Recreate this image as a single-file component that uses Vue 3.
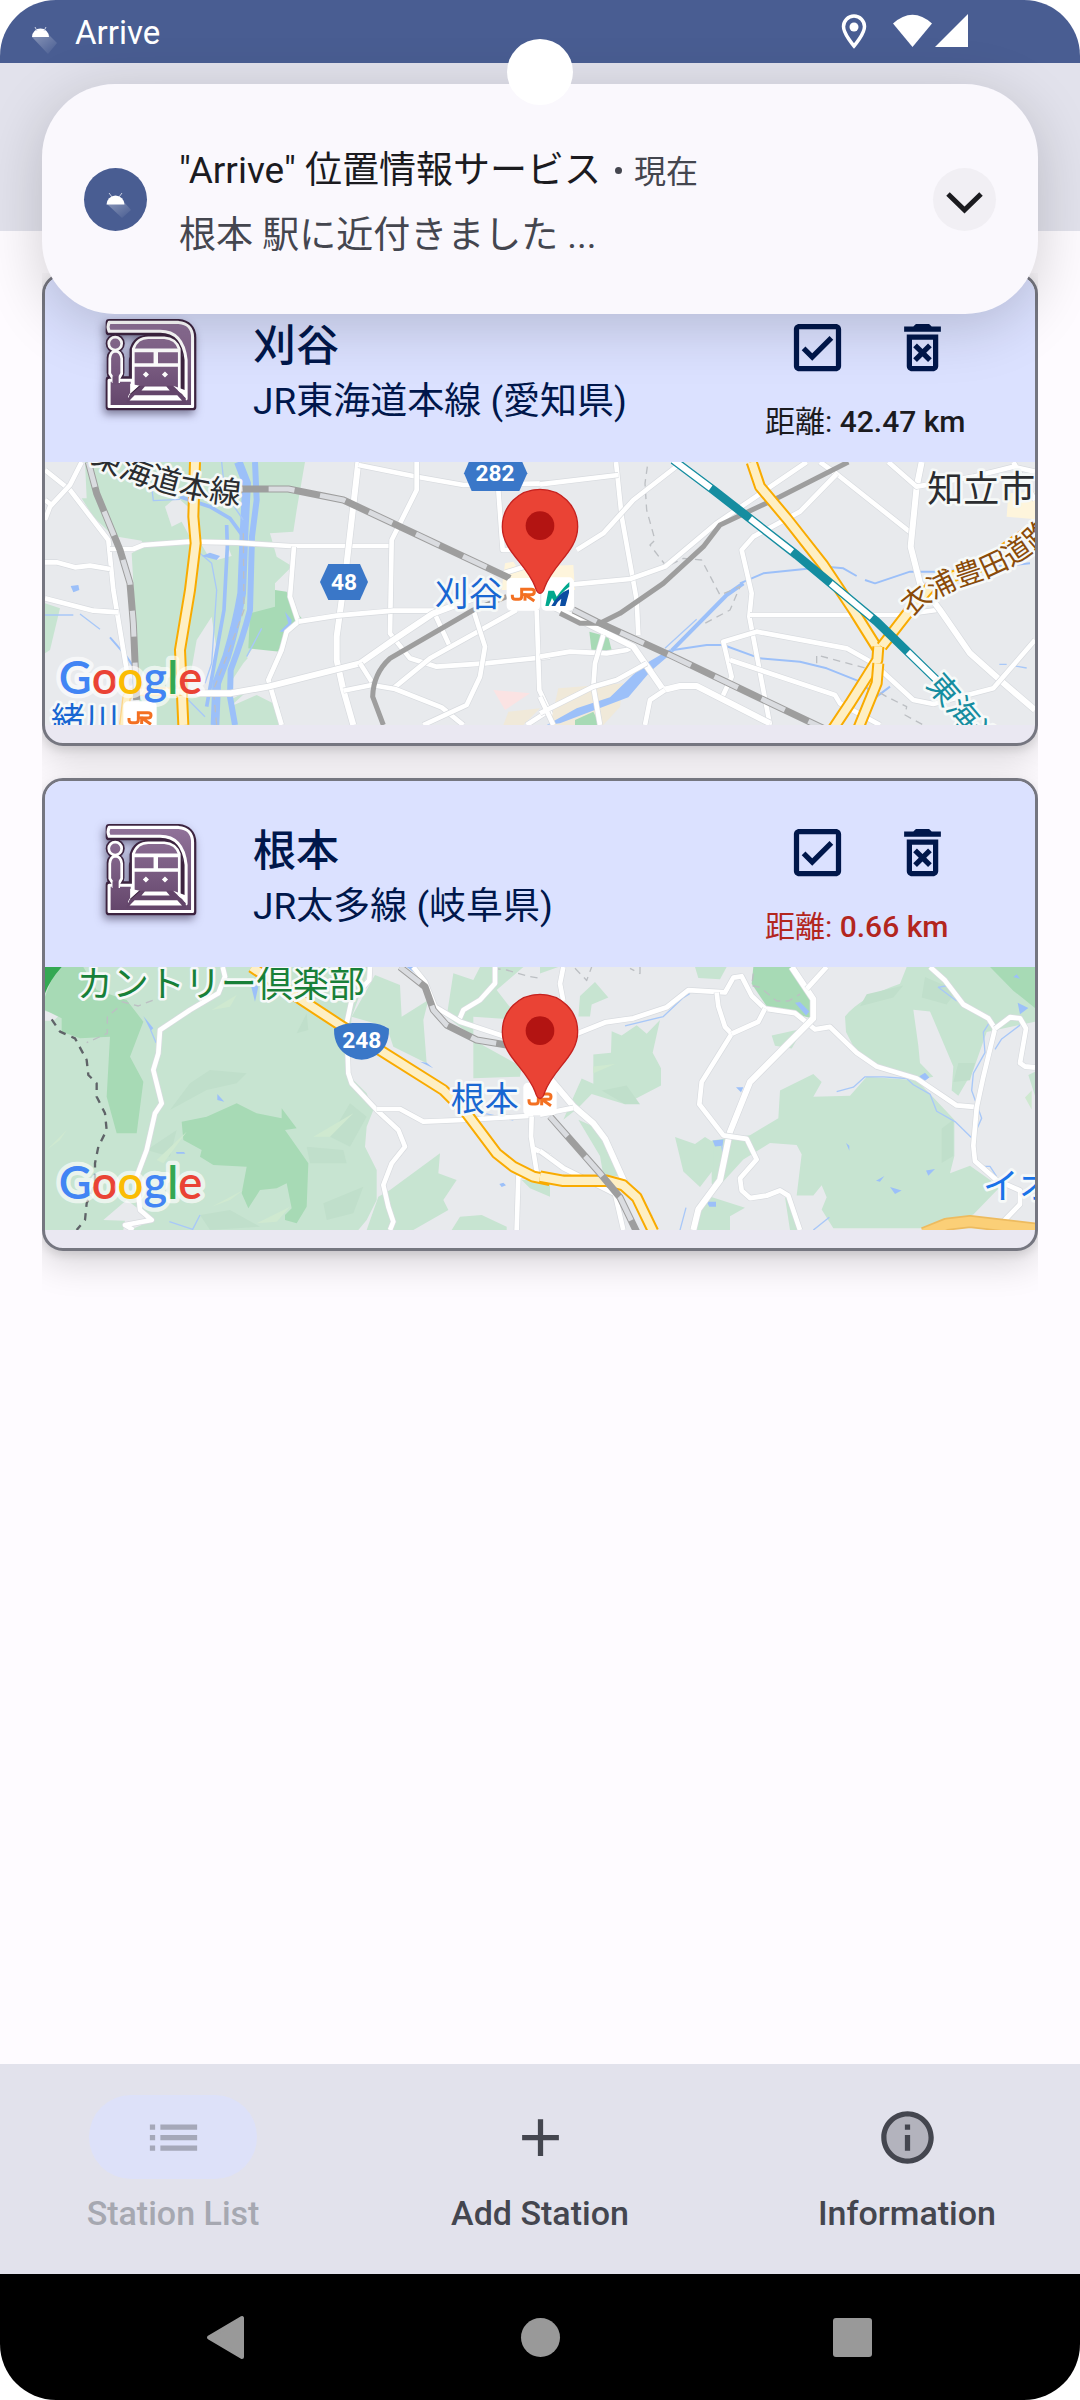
<script setup>
import { ref } from 'vue'

const kariyaMap = {
  viewBox: '45 36 2970 789',
  shift: 'translate(0 0)',
  halves: [
    {
      transform: 'translate(0 0)',
      shapes: [
        ['park', 'M165 36H825L800 180L790 245L720 250L785 350L735 400V500L650 620L700 680L600 770L680 735L750 770L745 825H330L325 660L310 400L305 310L340 290L335 272L250 258L190 200L155 145H170Z'],
        ['land', 'M405 170L425 230L455 215L480 262L485 180L440 140Z'],
        ['land', 'M515 285L590 280L605 318L560 330L530 310Z'],
        ['land', 'M720 250L790 282L785 348L740 320Z'],
        ['land', 'M640 640L700 570L740 610L715 690L610 745L600 700Z'],
        ['land', 'M500 570L545 500L560 600L530 740L470 740Z'],
        ['deep', 'M735 420L770 425L785 470L820 510L770 540L750 605L700 600L655 595L660 490L735 470Z'],
        ['park', 'M45 460L90 475L60 600L45 610Z'],
        ['rose', 'M1390 720L1500 730L1425 780Z'],
        ['sand', 'M1435 785L1530 775L1480 825H1420Z'],
        ['cream', 'M1425 340L1450 335L1460 350L1630 345L1635 420H1415Z'],
        ['river wide', 'M625 36L650 100L642 250L635 430Q620 520 590 620L560 700L555 825'],
        ['river', 'M675 36L680 150L666 260L660 480Q640 560 602 660L600 740L615 825'],
        ['river slim', 'M450 140L540 170L600 205L640 260M590 225L592 290L582 480L530 770'],
        ['stream', 'M575 36L585 130L640 210M510 310L545 340L560 420L545 640L525 700M45 495H130M150 492L210 538M365 110L370 152L450 148M475 750L525 800M695 535L650 620'],
        ['brook', 'M240 562L290 620L310 650'],
        ['pond', 'M122 408L145 405L148 420L130 427Z'],
        ['pond', 'M765 485L785 510L782 545H748L775 520Z'],
        ['pond', 'M540 308L570 318L560 330L515 318Z'],
        ['trail', 'M640 250L642 480L590 620L550 720L560 825'],
        ['road', 'M45 60L120 120L235 270L250 420L290 660'],
        ['road', 'M155 36L120 105L60 170L45 210M45 150L65 165'],
        ['road', 'M240 297H310L340 285L480 275L620 278L780 288H1085'],
        ['road', 'M45 337H80L135 352L180 347L240 357'],
        ['road', 'M45 445L190 482L265 487'],
        ['road bold', 'M985 36L950 340L920 560V630L940 720L970 825'],
        ['road', 'M985 45L1160 80L1300 105L1560 100'],
        ['road', 'M1160 36V120L1085 270L1080 550L1140 625L1220 650L1365 640L1560 620'],
        ['road', 'M792 290L780 440L805 515L770 545L755 600L715 690L755 825'],
        ['road', 'M805 515L920 497L1090 482H1210L1260 590'],
        ['road bold', 'M500 730H600L715 710L990 640L1090 570L1210 490L1330 445'],
        ['road', 'M1090 715L1200 625L1460 480'],
        ['road', 'M940 722L1025 705L1095 717L1235 772L1300 825M990 640L1025 695'],
        ['road', 'M1180 825L1310 765L1350 680L1365 590L1330 480'],
        ['road', 'M1520 480L1528 720L1570 810M1490 825L1560 780'],
        ['road', 'M1405 120L1418 300H1440M1420 370L1530 335'],
        ['highway', 'M495 36L490 200L497 280L480 420L450 600L460 825'],
        ['highway slim', 'M460 725H310L290 740L280 825'],
        ['rail', 'M175 36L200 130L270 300L300 400L310 520L320 750'],
        ['rail', 'M560 122L640 117H775L940 150L1440 385'],
        ['track', 'M1430 440L1330 480L1080 625Q1030 670 1028 740L1060 825'],
      ],
    },
    {
      transform: 'translate(1530 0)',
      shapes: [
        ['sand', 'M55 715L250 700L240 770L190 825H30Z'],
        ['deep', 'M148 545L205 560L215 600L155 605Z'],
        ['deep', 'M105 810L160 785L180 825H105Z'],
        ['cream', 'M1405 130L1485 125V208L1400 200Z'],
        ['pond', 'M20 825L110 775L210 742L310 645L390 598L400 605L330 665L265 742L60 820Z'],
        ['brook wide', 'M395 602L560 435L610 400'],
        ['brook', 'M600 400L670 370L860 350L910 355L950 378'],
        ['brook', 'M400 600L500 585H550L660 625L780 635L860 655L960 695L1010 740L1050 710'],
        ['brook', 'M975 390L1005 400L1110 365H1200L1470 340'],
        ['stream', 'M375 595L470 508M1378 643H1400M1425 648L1460 654'],
        ['trail', 'M322 50L315 100L320 180L345 270L330 285L380 350L430 325L485 330L540 435L600 410L570 480L495 520'],
        ['trail', 'M830 640V615L980 655M955 690L1040 740L1100 770L1095 795L1150 825'],
        ['road', 'M228 36L245 200L290 450L295 555'],
        ['road', 'M0 103L235 75'],
        ['road', 'M415 45L280 150L190 250L110 300'],
        ['road', 'M800 36L530 220L375 350L270 387L100 403'],
        ['road', 'M840 36L890 72L1115 250'],
        ['road', 'M890 72L780 185L640 260L605 300L635 430L628 500L690 825'],
        ['road', 'M630 495H1080L1190 480'],
        ['road bold', 'M1145 36L1130 110L1112 290L1140 400L1200 480L1290 610L1380 690L1485 780'],
        ['road', 'M1045 36L1130 110L1300 80L1420 50L1485 65M1420 36L1485 150'],
        ['road', 'M545 745L575 680L550 575L650 545L920 595L1000 640L1120 750L1180 762L1360 715L1485 570'],
        ['road', 'M570 630L885 735L900 760L1020 825'],
        ['road', 'M0 620L90 605L200 610L260 600L280 590'],
        ['road bold', 'M40 470L280 590L370 720L420 708H470L690 820'],
        ['road', 'M375 720L330 750L315 825'],
        ['road', 'M190 555L165 640L160 710L180 825'],
        ['road', 'M0 790L160 710L230 690L320 640M0 740L40 825'],
        ['track', 'M925 36L720 140L540 225L490 290L370 400L240 490L180 520H120L60 490'],
        ['highway', 'M635 36L660 110L740 205L850 345L940 480L1015 600'],
        ['highway', 'M1025 590L1110 480L1180 400L1320 350L1485 230'],
        ['highway', 'M1015 590L1012 630L930 760L880 835'],
        ['highway', 'M1015 640L1010 700L955 835'],
        ['rail', 'M100 480L170 515L400 620L640 735L850 835'],
        ['express', 'M400 30L520 120L770 315L1010 515L1190 690'],
      ],
    },
  ],
  curved: [
    { id: 'tokaido', text: '東海道本線', d: 'M180 36Q400 158 700 167', tone: 'ink', size: 94 },
    { id: 'kinuura', text: '衣浦豊田道路', d: 'M2645 502Q2720 428 2850 390Q2960 355 3060 260', tone: 'brown', size: 84 },
    { id: 'shinkansen', text: '東海道', d: 'M2686 706L2926 986', tone: 'teal', size: 92 },
  ],
  labels: [
    { text: '知立市', x: 2692, y: 156, tone: 'ink', size: 108 },
    { text: '刈谷', x: 1214, y: 468, tone: 'blue', size: 102 },
    { text: '緒川', x: 63, y: 846, tone: 'blue', size: 102 },
  ],
  badges: [
    { x: 1430, y: 384 },
    { x: 280, y: 754 },
  ],
  meitetsu: true,
  shields: [
    { text: '282', x: 1395, y: 93, d: 'M1302 70L1325 16H1468L1492 70L1468 123H1325Z' },
    { text: '48', x: 942, y: 419, d: 'M870 396L895 342H990L1014 396L990 450H895Z' },
  ],
}

const nemotoMap = {
  viewBox: '45 51 2970 789',
  shift: 'translate(0 15)',
  halves: [
    {
      transform: 'translate(0 0)',
      shapes: [
        ['park', 'M45 51H1020L965 200L950 370L1010 430L1030 480L1010 530L1005 590L1040 660V750L1010 810L985 840H45Z'],
        ['land', 'M45 183L90 195L70 212H45Z'],
        ['land', 'M220 810L290 750L330 780L370 810L300 840H280L285 812Z'],
        ['deep', 'M45 140L80 51H160L200 120L290 150L340 215L300 320L340 395L320 550H260L230 440L240 260L150 265L95 245V205L45 180Z'],
        ['deep', 'M455 515L530 500L620 460L680 490L755 505V475L800 535L765 540L835 640L830 770L800 820L765 810V795L785 775L770 700L740 715L690 720L655 775L635 730L650 650L550 645L510 620L515 600L460 570Z'],
        ['shade', 'M540 360L650 370L620 400L530 420L420 480L480 400Z'],
        ['shade', 'M800 250L830 190L835 240ZM960 460L1010 500L960 590L900 560ZM830 590L940 600L950 640L840 640Z'],
        ['shade', 'M510 795L600 780L690 830L540 840ZM880 760L1000 710L970 790L890 810ZM350 600L440 540L420 620Z'],
        ['glow', 'M545 180L620 135L600 170ZM850 560L970 490L900 560ZM380 630L470 545L400 640ZM545 770L640 720L600 750ZM50 600L110 540L90 570ZM680 820L780 770L740 815Z'],
        ['park', 'M1035 75L1110 105L1115 200L1195 150L1180 210L1190 340L1090 290L1070 230L965 200Z'],
        ['park', 'M1270 70L1330 90L1350 51H1480L1400 120L1470 210L1330 200V270L1475 350L1470 380L1330 385L1330 260L1250 200Z'],
        ['park', 'M1080 720L1230 610L1225 670L1280 690L1240 750L1255 780L1150 840H1010L1045 740Z'],
        ['park', 'M1265 840L1290 800L1355 795L1430 830V840Z'],
        ['park', 'M1475 690H1560V740L1500 715Z'],
        ['pond', 'M340 198L370 235L362 242Z'],
        ['pond', 'M562 432L583 455L562 450Z'],
        ['pond', 'M660 95L685 110L675 155Z'],
        ['pond', 'M1130 51H1150L1170 80Z'],
        ['pond', 'M1170 335L1190 338L1210 355ZM438 606H462L466 611H440ZM1408 702L1420 698L1428 706L1415 711Z'],
        ['stream', 'M362 240L378 278M418 815L488 838L510 795M1340 485L1450 510'],
        ['trail', 'M275 155L325 168L370 150M262 175L232 200V250L170 278M1390 55L1430 60L1500 80L1530 85'],
        ['road', 'M578 51L585 80L565 130L480 180L390 240L385 310L370 360L395 460L375 490L350 600L320 680L330 780L365 810L285 825L310 840'],
        ['road', 'M1020 51L1018 90L965 150L950 220L955 370L965 400L1040 480L1105 540L1125 590L1085 640L1060 705L1075 770L1090 815L1080 840'],
        ['road', 'M1040 477H1110L1180 515L1300 510L1510 497'],
        ['road', 'M1505 500L1503 560L1520 665L1465 680L1460 840M1510 595L1560 620'],
        ['road', 'M1395 51V100L1350 150L1300 180L1285 215'],
        ['road', 'M1150 51L1185 95L1215 170L1290 215L1440 265'],
        ['highway', 'M665 51L930 225L1240 420L1310 490L1400 610L1450 650L1510 680L1560 690'],
        ['rail', 'M1110 51L1185 110L1210 180L1250 225L1340 270L1430 285'],
        ['footpath', 'M65 208L90 245L135 265L170 330L175 375L200 400V440L225 490L230 540L205 590L195 640L195 700L170 760L165 810L140 840'],
        ['pin-edge', 'M45 51H95Q60 90 45 130Z'],
      ],
    },
    {
      transform: 'translate(1530 -570) scale(1 1.0331)',
      shapes: [
        ['park', 'M915 745Q960 690 1080 650L1100 601H1485V760L1340 790L1300 900L1255 975L1235 960L1240 890L1170 730L1120 725L1135 830L1140 880L1180 920L1130 930L1010 890L950 850L918 790Z'],
        ['park', 'M720 960L820 912L845 935L820 978L930 975L980 920L1130 930L1180 980L1243 1045V1150L1230 1200L1290 1178L1380 1240L1300 1320L1170 1360H880L845 1305L860 1270L845 1235L820 1265H770L785 1145L770 1118L690 1112L610 1160L530 1245L515 1230V1105L630 1090L715 1040Z'],
        ['park', 'M160 855L213 850L215 788L245 800L290 770L320 795L360 755L338 850L363 895V945L255 1000L155 970L115 1010L70 1045L125 925L160 940Z'],
        ['park', 'M405 1095L465 1115L495 1095L520 1110V1190L480 1240L430 1195Z'],
        ['park', 'M115 1045L185 1075L245 1210L190 1205L180 1150Z'],
        ['park', 'M500 1265L615 1300L570 1325V1365H465Z'],
        ['park', 'M465 601H560L540 637L475 633Z'],
        ['park', 'M120 685L165 645L205 690L155 710L150 745H115Z'],
        ['park', 'M695 800L790 780L755 838L705 830Z'],
        ['park', 'M735 1270L760 1290L780 1365H750ZM1465 915L1485 905V975ZM0 601H55L0 620Z'],
        ['deep', 'M640 601H755L820 700L815 750L680 715L635 650Z'],
        ['deep', 'M1350 601H1485V720L1420 670Z'],
        ['shade', 'M1155 630L1250 670L1220 710L1145 690ZM980 680L1090 655L1060 690L960 715ZM1255 880L1305 880L1290 930L1240 935ZM1205 1070L1240 1045V1150L1205 1170ZM185 960L260 945L300 1000L255 1000Z'],
        ['glow', 'M160 890L225 883L160 910ZM1455 980L1475 960V1015Z'],
        ['pond', 'M765 705L780 703L808 730L798 742Z'],
        ['pond', 'M1433 705L1465 720L1440 738Z'],
        ['pond', 'M1420 630L1430 622L1440 635ZM1138 918L1155 908L1168 922L1150 935Z'],
        ['pond', 'M1050 1240L1085 1250L1065 1260ZM518 1105L550 1102L548 1120L525 1122Z'],
        ['pond', 'M500 1283H528V1297H508ZM1158 1192L1185 1188L1165 1207ZM1008 1222L1033 1208L1020 1225ZM588 950H610L603 965ZM918 1112L928 1120V1135Z'],
        ['stream', 'M255 772L370 745L430 690L450 678M890 963L940 950L975 920H1030L1100 925L1120 943L1170 970L1190 1020L1245 1050L1298 1100L1325 1040L1295 960L1300 910L1335 850L1330 790L1350 760M1365 840L1385 810L1440 770M1300 1165L1320 1180H1350L1370 1210M1250 700L1195 660L1225 655M820 1365L868 1328M420 1365L438 1300M545 1120L555 1170'],
        ['trail', 'M105 605L140 640L155 601M300 601V620L270 605M640 620L635 655L660 660L710 700H745L780 680'],
        ['road', 'M70 601L60 650L70 700'],
        ['road', 'M110 795L195 762L280 750L380 718L445 668L555 675L580 632L605 628L635 685L675 722L765 735L825 782L870 775L950 850L1010 890L1130 925L1250 1003L1310 1008'],
        ['road bold', 'M755 601L820 695V750L630 935L570 1080L540 1220L475 1305L460 1365'],
        ['road', 'M530 675L535 715L555 775L575 795L485 935L478 1000L550 1090L620 1100L650 1160L600 1215L605 1250L630 1272L680 1265L720 1250L745 1265L780 1365'],
        ['road', 'M675 722L655 760L575 795M860 601L800 665'],
        ['road', 'M1170 601L1215 640L1270 710L1345 750L1365 780L1330 920L1310 1010L1300 1120L1305 1165L1370 1220L1440 1250L1440 1290L1390 1340'],
        ['road', 'M1365 780L1410 747L1440 750L1458 780L1440 880L1455 890L1485 893'],
        ['road bold', 'M30 925L100 1005L160 1055L195 1100L260 1240L330 1330'],
        ['road', 'M0 1135L70 1185L225 1260L250 1365'],
        ['road', 'M0 1030L100 1010'],
        ['highway', 'M0 1210L70 1222H200L250 1235L290 1270L340 1370'],
        ['motorway', 'M1150 1375L1220 1348L1290 1340L1485 1362'],
        ['rail', 'M30 1035L180 1200L240 1270L290 1370'],
      ],
    },
  ],
  curved: [],
  labels: [
    { text: 'カントリー倶楽部', x: 140, y: 142, tone: 'green', size: 108 },
    { text: '根本', x: 1262, y: 484, tone: 'blue', size: 102 },
    { text: 'イオン', x: 2858, y: 748, tone: 'azure', size: 108 },
  ],
  badges: [{ x: 1480, y: 398 }],
  meitetsu: false,
  shields: [
    {
      text: '248',
      x: 995,
      y: 293,
      d: 'M912 236Q940 220 968 219H1022Q1050 220 1077 236Q1078 296 1030 320Q995 338 960 320Q911 296 912 236Z',
    },
  ],
}

const stations = ref([
  { name: '刈谷', line: 'JR東海道本線 (愛知県)', distance: '42.47 km', near: false, enabled: true, map: kariyaMap },
  { name: '根本', line: 'JR太多線 (岐阜県)', distance: '0.66 km', near: true, enabled: true, map: nemotoMap },
])
</script>

<template>
  <div class="screen">
    <header class="status-bar">
      <svg class="droid" viewBox="0 0 63 63" aria-hidden="true">
        <defs>
          <linearGradient id="cast" x1="0" y1="0" x2="1" y2="1">
            <stop offset="0" stop-color="#fff" stop-opacity=".35" />
            <stop offset="1" stop-color="#fff" stop-opacity="0" />
          </linearGradient>
        </defs>
        <path d="M20 37L37 35L45 43L36 54Z" fill="url(#cast)" />
        <path d="M20 37a8 8 0 0 1 17 0z" fill="#fff" />
        <path d="M23 27l2 4M34 27l-2 4" stroke="#c9d0e4" stroke-width="1" />
      </svg>
      <span class="carrier">Arrive</span>
      <div class="status-icons">
        <svg width="26" height="36" viewBox="0 0 26 36" aria-hidden="true">
          <path d="M13 2C7 2 2.500 7 2.500 12.500C2.500 20 13 32 13 32S23.500 20 23.500 12.500C23.500 7 19 2 13 2Z" fill="none" stroke="#fff" stroke-width="3.500" />
          <circle cx="13" cy="13" r="4.500" fill="#fff" />
        </svg>
        <svg class="wifi" width="75" height="34" viewBox="0 0 75 34" aria-hidden="true">
          <path d="M0 9.500Q19.500-8 39 9.500L19.500 33Z" fill="#fff" />
          <path d="M75 0V33H42Z" fill="#fff" />
        </svg>
      </div>
    </header>
    <div class="app-bar"></div>

    <main class="content">
      <div class="cards">
        <article v-for="station in stations" :key="station.name" class="card">
          <div class="card-head">
            <svg class="station-icon" viewBox="48 30 270 270" aria-hidden="true">
              <defs>
                <linearGradient id="plum" gradientUnits="userSpaceOnUse" x1="0" y1="40" x2="0" y2="290">
                  <stop offset="0" stop-color="#91739a" />
                  <stop offset="1" stop-color="#63456a" />
                </linearGradient>
              </defs>
              <g stroke="#3d2440" stroke-width="20" stroke-linejoin="round" fill="#3d2440">
                <path d="M60 40H264C290 42 306 58 306 84V288H60V208H128V150L290 150V150C280 95 255 68 210 68H60Z" />
                <circle cx="78" cy="102" r="18" />
                <rect x="63" y="130" width="32" height="70" rx="12" />
                <path d="M130 240V120Q140 86 175 86H222Q258 86 266 120V240Z" />
              </g>
              <path d="M60 40H264C290 42 305 58 305 84V287H60V210H128V245L120 258H275L286 264V150C280 95 255 66 210 66H60Q54 53 60 40Z" fill="url(#plum)" stroke="#fff" stroke-width="9" stroke-linejoin="round" />
              <circle cx="78" cy="102" r="19" fill="url(#plum)" stroke="#fff" stroke-width="8" />
              <path d="M62 190V146Q64 124 79 124Q95 126 97 146V190L88 206V214H72V206Z" fill="url(#plum)" stroke="#fff" stroke-width="8" />
              <path d="M70 198H88V222H70Z" fill="#6d4f74" />
              <path d="M131 244V118Q142 85 175 85H222Q256 87 266 118V244Z" fill="url(#plum)" stroke="#fff" stroke-width="8" />
              <path d="M131 122H266M131 165H266" stroke="#fff" stroke-width="11" />
              <path d="M197 122V165" stroke="#fff" stroke-width="13" />
              <path d="M168 184l9 9l-9 9l-9-9ZM224 184l9 9l-9 9l-9-9Z" fill="#fff" />
              <path d="M120 254L148 226H248L285 262V276H110Z" fill="#63456a" />
              <path d="M122 220L150 226L122 250Z" fill="#fff" />
              <path d="M248 226L286 240V262Z" fill="#fff" />
              <path d="M165 228H228L238 240H155ZM135 254H260L274 269H120Z" fill="#fff" />
              <path d="M150 226L122 251" stroke="#3d2440" stroke-width="3" />
            </svg>
            <div class="station-text">
              <h2>{{ station.name }}</h2>
              <p>{{ station.line }}</p>
            </div>
            <div class="station-side">
              <div class="actions">
                <label class="action">
                  <input v-model="station.enabled" type="checkbox" :aria-label="station.name" />
                  <svg viewBox="0 0 24 24" aria-hidden="true">
                    <path d="M19 3H5c-1.110 0-2 .9-2 2v14c0 1.100.89 2 2 2h14c1.110 0 2-.9 2-2V5c0-1.100-.89-2-2-2zm0 16H5V5h14v14z" />
                    <path v-if="station.enabled" d="M17.990 9l-1.410-1.420-6.590 6.590-2.580-2.570-1.420 1.410 4 3.990z" />
                  </svg>
                </label>
                <button class="action" type="button" aria-label="削除">
                  <svg viewBox="0 0 24 24" aria-hidden="true">
                    <path d="M14.120 10.470L12 12.590l-2.130-2.120-1.410 1.410L10.590 14l-2.120 2.120 1.410 1.410L12 15.410l2.120 2.120 1.410-1.410L13.410 14l2.120-2.120zM15.500 4l-1-1h-5l-1 1H5v2h14V4zM6 19c0 1.100.9 2 2 2h8c1.100 0 2-.9 2-2V7H6v12zM8 9h8v10H8V9z" />
                  </svg>
                </button>
              </div>
              <p class="distance" :class="{ near: station.near }">
                距離: <b>{{ station.distance }}</b>
              </p>
            </div>
          </div>

          <svg class="map" :viewBox="station.map.viewBox" preserveAspectRatio="xMidYMid slice" role="img" :aria-label="station.name">
            <g v-for="half in station.map.halves" :key="half.transform" :transform="half.transform">
              <template v-for="([kind, d], i) in half.shapes" :key="i">
                <path v-if="kind.startsWith('road')" :class="[kind, 'casing']" :d="d" />
                <path :class="kind" :d="d" />
                <path v-if="/^(highway|rail|express|motorway)/.test(kind)" :class="[kind, 'core']" :d="d" />
              </template>
            </g>

            <g class="shields">
              <template v-for="shield in station.map.shields" :key="shield.text">
                <path :d="shield.d" />
                <text :x="shield.x" :y="shield.y">{{ shield.text }}</text>
              </template>
            </g>

            <g class="labels">
              <template v-for="label in station.map.curved" :key="label.id">
                <path :id="label.id" :d="label.d" fill="none" />
                <text :class="label.tone" :font-size="label.size">
                  <textPath :href="'#' + label.id">{{ label.text }}</textPath>
                </text>
              </template>
              <text v-for="label in station.map.labels" :key="label.text" :class="label.tone" :font-size="label.size" :x="label.x" :y="label.y">{{ label.text }}</text>
            </g>

            <g v-for="badge in station.map.badges" :key="badge.x" :transform="`translate(${badge.x} ${badge.y})`">
              <rect width="100" height="98" rx="14" fill="#fff" />
              <path d="M17 50V55Q17 64 26 64H36Q45 64 45 55V34H74Q83 34 83 42Q83 50 74 50H55L83 69" fill="none" stroke="#f37021" stroke-width="9" />
              <path d="M55 46V68" stroke="#f37021" stroke-width="9" />
            </g>
            <g v-if="station.map.meitetsu">
              <rect x="1534" y="382" width="98" height="100" rx="14" fill="#fff" />
              <path d="M1555 422H1572L1580 440Q1600 412 1618 396V410Q1590 430 1574 458L1566 444L1556 468H1546Z" fill="#00a88e" />
              <path d="M1564 468Q1585 430 1617 418V428L1606 468H1590L1594 446Q1582 454 1576 468Z" fill="#0b4da2" />
            </g>

            <g :transform="station.map.shift">
              <path d="M1530 118C1466 118 1417 168 1417 230C1417 304 1490 340 1516 412Q1521 430 1530 430Q1539 430 1544 412C1570 340 1643 304 1643 230C1643 168 1594 118 1530 118Z" fill="#ea4335" stroke="#c5221f" stroke-width="4" />
              <circle cx="1530" cy="227" r="43" fill="#b31412" />
              <text class="google" x="86" y="732">
                <tspan fill="#4285f4">G</tspan><tspan fill="#ea4335">o</tspan><tspan fill="#fbbc04">o</tspan><tspan fill="#4285f4">g</tspan><tspan fill="#34a853">l</tspan><tspan fill="#ea4335">e</tspan>
              </text>
            </g>
          </svg>
        </article>
      </div>
    </main>

    <nav class="tabs">
      <button class="tab current" type="button" disabled>
        <span class="tab-icon">
          <svg viewBox="0 0 24 24" aria-hidden="true"><path d="M3 13h2v-2H3v2zm0 4h2v-2H3v2zm0-8h2V7H3v2zm4 4h14v-2H7v2zm0 4h14v-2H7v2zM7 7v2h14V7H7z" /></svg>
        </span>
        Station List
      </button>
      <button class="tab" type="button">
        <span class="tab-icon">
          <svg viewBox="0 0 24 24" aria-hidden="true"><path d="M19 13h-6v6h-2v-6H5v-2h6V5h2v6h6v2z" /></svg>
        </span>
        Add Station
      </button>
      <button class="tab" type="button">
        <span class="tab-icon">
          <svg viewBox="0 0 24 24" aria-hidden="true">
            <circle cx="12" cy="12" r="9" opacity=".3" />
            <path d="M11 7h2v2h-2zm0 4h2v6h-2zm1-9C6.480 2 2 6.480 2 12s4.480 10 10 10 10-4.480 10-10S17.520 2 12 2zm0 18c-4.410 0-8-3.590-8-8s3.590-8 8-8 8 3.590 8 8-3.590 8-8 8z" />
          </svg>
        </span>
        Information
      </button>
    </nav>

    <div class="system-nav">
      <button type="button" aria-label="戻る">
        <svg viewBox="0 0 63 63"><path d="M12 31.500L45 12V51Z" stroke="#999" stroke-width="4" stroke-linejoin="round" /></svg>
      </button>
      <button type="button" aria-label="ホーム">
        <svg viewBox="0 0 63 63"><circle cx="31.500" cy="31.500" r="19.500" /></svg>
      </button>
      <button type="button" aria-label="最近">
        <svg viewBox="0 0 63 63"><rect x="12" y="12" width="39" height="39" rx="3" /></svg>
      </button>
    </div>

    <section class="notification">
      <span class="app-icon">
        <svg class="droid" viewBox="0 0 63 63" aria-hidden="true">
          <path d="M23 36L40 34L47 42L38 50Z" fill="url(#cast)" />
          <path d="M22.500 36.500a9 9 0 0 1 18 0z" fill="#fff" />
          <path d="M25 25l3 4M38 25l-3 4" stroke="#c9d0e4" stroke-width="1" />
        </svg>
      </span>
      <div class="message">
        <p class="title">"Arrive" 位置情報サービス<span class="time"><i></i>現在</span></p>
        <p class="body">根本 駅に近付きました ...</p>
      </div>
      <button class="expand" type="button" aria-label="展開">
        <svg viewBox="0 0 63 63" aria-hidden="true"><path d="M15 26L31.500 42L48 26" fill="none" stroke="#1b1b1f" stroke-width="5" /></svg>
      </button>
    </section>
    <div class="camera"></div>
  </div>
</template>

<style>
body {
  margin: 0;
  background: #fff;
}
</style>

<style scoped>
.screen {
  position: relative;
  display: flex;
  flex-direction: column;
  min-height: 100vh;
  overflow: hidden;
  border-radius: 56px;
  background: #fefbff;
  color: #1b1b1f;
  font-family: Roboto, "Noto Sans CJK JP", sans-serif;
}
h2,
p {
  margin: 0;
}
button {
  padding: 0;
  border: 0;
  background: none;
  font: inherit;
  color: inherit;
}
svg {
  display: block;
}

.status-bar {
  display: flex;
  align-items: center;
  height: 63px;
  padding: 0 112px 0 12px;
  background: #495d92;
  color: #fff;
}
.droid {
  width: 63px;
  height: 63px;
}
.carrier {
  padding-top: 2px;
  font-size: 33px;
  line-height: 40px;
}
.status-icons {
  display: flex;
  gap: 26px;
  margin-left: auto;
}
.app-bar {
  height: 168px;
  background: #e2e2ec;
}

.content {
  flex: 1;
  padding: 42px 42px 0;
}
.cards {
  display: flex;
  flex-direction: column;
  gap: 32px;
  padding-bottom: 64px;
  overflow: hidden;
}
.card {
  overflow: hidden;
  padding-bottom: 18px;
  border: 3px solid #757680;
  border-radius: 21px;
  background: #eae8f2;
  box-shadow: 0 12px 36px rgba(0, 0, 0, 0.16), 0 4px 8px rgba(0, 0, 0, 0.1);
}
.card-head {
  display: flex;
  height: 186px;
  padding: 0 60px;
  background: #dbe1ff;
  color: #00174b;
}
.station-icon {
  width: 92px;
  height: 92px;
  margin-top: 43px;
  overflow: visible;
  filter: drop-shadow(-2px 4px 4px rgba(30, 20, 50, 0.5));
}
.station-text {
  flex: 1;
  margin-left: 56px;
  padding-top: 41px;
}
.station-text h2 {
  font-size: 43px;
  font-weight: 500;
  line-height: 58px;
}
.station-text p {
  font-size: 37px;
  line-height: 54px;
}
.station-side {
  padding-top: 19px;
}
.actions {
  display: flex;
}
.action {
  position: relative;
  display: grid;
  place-items: center;
  width: 105px;
  height: 105px;
}
.action input {
  position: absolute;
  inset: 0;
  width: 100%;
  height: 100%;
  margin: 0;
  opacity: 0;
}
.action svg {
  width: 63px;
  height: 63px;
  fill: #00174b;
}
.distance {
  padding-top: 1px;
  color: #1b1b1f;
  font-size: 30px;
  line-height: 42px;
}
.distance b {
  font-weight: 500;
}
.distance.near {
  color: #b3261e;
}

.map {
  width: 100%;
  height: 263px;
  background: #e8eaed;
}
.land { fill: #e8eaed; }
.park { fill: #c7e4d1; }
.deep { fill: #a7dab5; }
.shade { fill: #c0dfcb; }
.glow { fill: #cfe9d0; }
.sand { fill: #f0e9d9; }
.cream { fill: #fef5dc; }
.rose { fill: #fbe3e3; }
.pond { fill: #9cc0f9; }
.pin-edge { fill: #34a853; }
.river,
.brook,
.stream,
.trail,
.footpath,
.road,
.highway,
.motorway,
.rail,
.track,
.express {
  fill: none;
  stroke-linejoin: round;
}
.river { stroke: #9cc0f9; stroke-width: 18; }
.river.wide { stroke-width: 26; }
.river.slim { stroke-width: 11; }
.brook { stroke: #9cc0f9; stroke-width: 6; }
.brook.wide { stroke-width: 12; }
.stream { stroke: #a8c8f8; stroke-width: 4; }
.trail { stroke: #bcbfc3; stroke-width: 4; stroke-dasharray: 22 16; }
.footpath { stroke: #5f6368; stroke-width: 7; stroke-dasharray: 22 19; }
.road { stroke: #fff; stroke-width: 14; }
.road.casing { stroke: #d8dbdf; stroke-width: 18; }
.road.bold { stroke-width: 18; }
.road.bold.casing { stroke-width: 22; }
.highway { stroke: #f9ab00; stroke-width: 36; }
.highway.core { stroke: #feefc3; stroke-width: 24; }
.highway.slim { stroke: #fbd58a; stroke-width: 26; }
.highway.slim.core { stroke: #feefc3; stroke-width: 18; }
.motorway { stroke: #edbb5f; stroke-width: 38; }
.motorway.core { stroke: #fbcf77; stroke-width: 28; }
.rail { stroke: #9e9e9e; stroke-width: 21; }
.rail.core { stroke: #dadce0; stroke-width: 15; stroke-dasharray: 78 78; }
.track { stroke: #9e9e9e; stroke-width: 15; }
.express { stroke: #158da0; stroke-width: 26; }
.express.core { stroke: #fff; stroke-width: 18; stroke-dasharray: 160 150; stroke-dashoffset: 20; }

.labels text {
  font-family: Roboto, "Noto Sans CJK JP", sans-serif;
  stroke: #f6f9f8;
  stroke-width: 16;
  stroke-linejoin: round;
  paint-order: stroke;
}
.ink { fill: #2b2d30; }
.brown { fill: #8a4b08; }
.teal { fill: #158da0; }
.blue { fill: #1967d2; }
.azure { fill: #1a73e8; }
.green { fill: #188038; }
.shields path {
  fill: #3a77c8;
}
.shields text {
  fill: #fff;
  font-family: Roboto, sans-serif;
  font-size: 68px;
  font-weight: 700;
  text-anchor: middle;
}
.google {
  font-family: Lato, sans-serif;
  font-size: 136px;
  font-weight: 600;
  stroke: rgba(255, 255, 255, 0.65);
  stroke-width: 26;
  stroke-linejoin: round;
  paint-order: stroke;
}

.tabs {
  display: flex;
  gap: 21px;
  height: 210px;
  background: #e2e2ec;
  color: #44464f;
}
.tab {
  display: flex;
  flex: 1;
  flex-direction: column;
  align-items: center;
  gap: 14px;
  padding-top: 31px;
  font-size: 34px;
  font-weight: 500;
  line-height: 40px;
}
.tab-icon {
  display: grid;
  place-items: center;
  width: 168px;
  height: 84px;
  border-radius: 42px;
}
.tab-icon svg {
  width: 63px;
  height: 63px;
  fill: #44464f;
}
.tab.current {
  color: #a6a8b1;
}
.tab.current .tab-icon {
  background: #dde1f9;
}
.tab.current svg {
  fill: #a5a8b9;
}

.system-nav {
  display: flex;
  justify-content: space-between;
  height: 126px;
  padding: 0 165px;
  background: #000;
}
.system-nav button {
  display: grid;
  place-items: center;
  width: 126px;
}
.system-nav svg {
  width: 63px;
  height: 63px;
  fill: #999;
}

.notification {
  position: absolute;
  top: 84px;
  right: 42px;
  left: 42px;
  display: flex;
  align-items: center;
  box-sizing: border-box;
  height: 230px;
  padding: 0 42px;
  border-radius: 73px;
  background: #faf8fd;
  box-shadow: 0 12px 60px rgba(0, 0, 0, 0.18);
}
.app-icon {
  width: 63px;
  height: 63px;
  border-radius: 50%;
  background: #495d92;
}
.message {
  flex: 1;
  margin-left: 32px;
  padding-top: 8px;
}
.message p {
  font-size: 37px;
  line-height: 63px;
}
.message .body,
.time {
  color: #44464f;
}
.time {
  font-size: 32px;
}
.time i {
  display: inline-block;
  width: 7px;
  height: 7px;
  margin: 0 12px 9px 14px;
  border-radius: 50%;
  background: #44464f;
}
.expand {
  width: 63px;
  height: 63px;
  border-radius: 50%;
  background: #f1eff4;
}
.camera {
  position: absolute;
  top: 39px;
  left: 50%;
  width: 66px;
  height: 66px;
  margin-left: -33px;
  border-radius: 50%;
  background: #fff;
}
</style>
